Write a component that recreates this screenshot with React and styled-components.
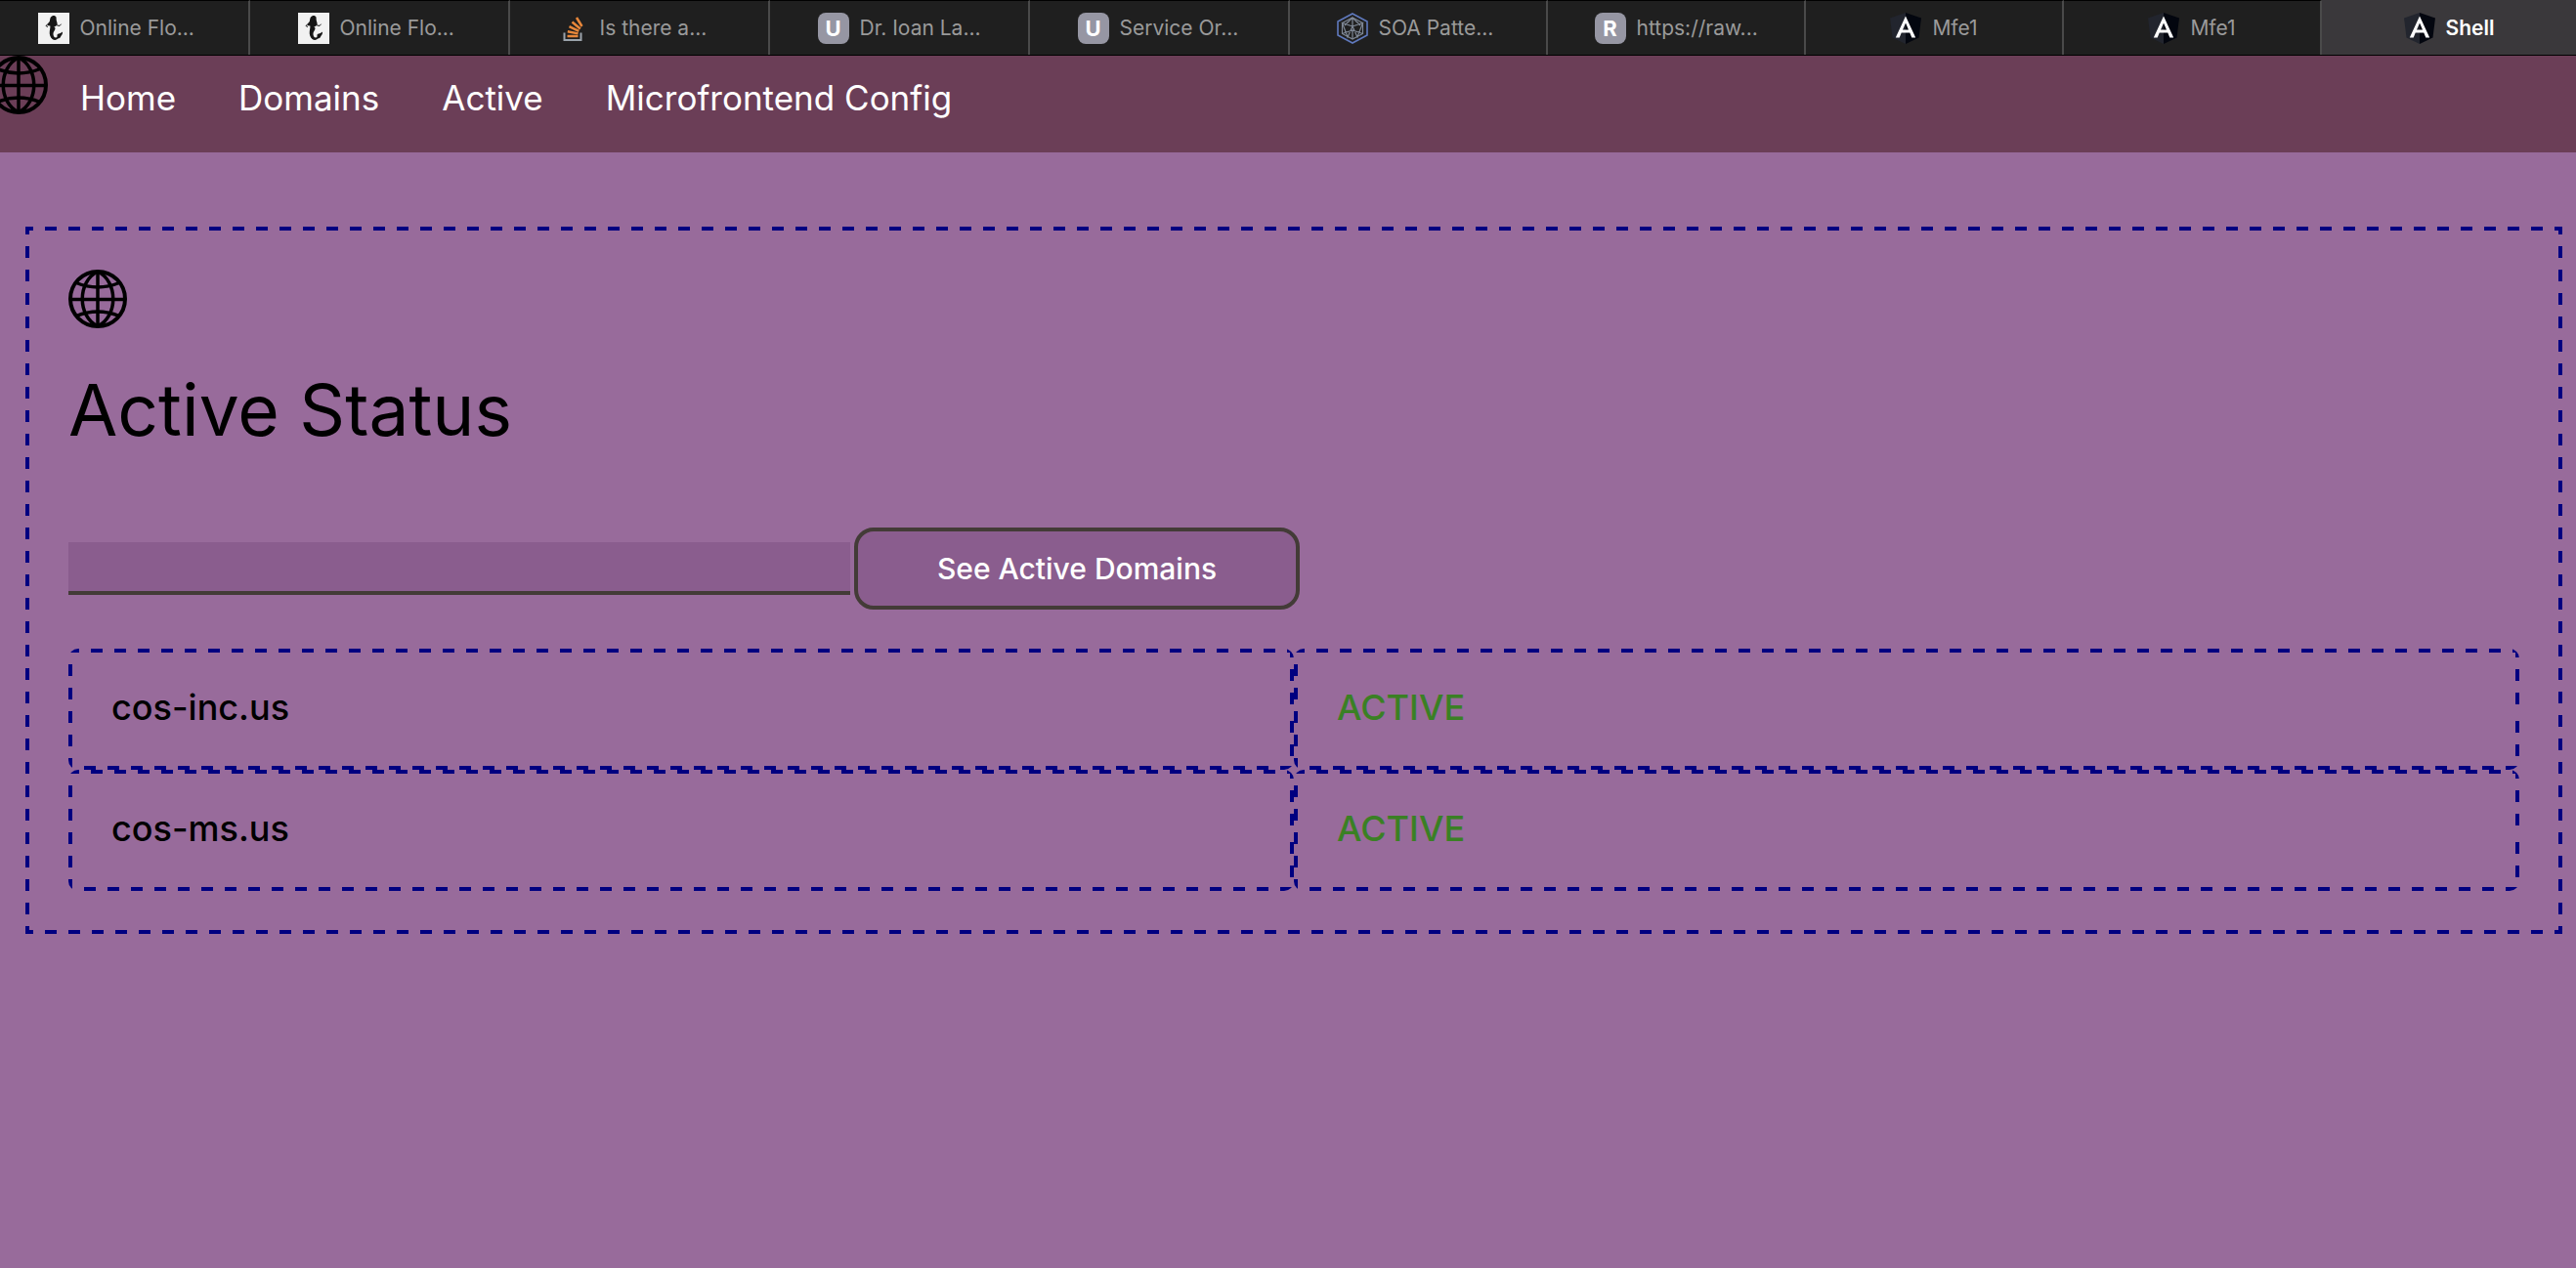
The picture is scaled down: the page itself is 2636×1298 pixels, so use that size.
import React from "react";
import styled, { createGlobalStyle, css } from "styled-components";

const sans = `Inter, "Liberation Sans", sans-serif`;
const navy = "#000080";

const GlobalStyle = createGlobalStyle`
  *, *::before, *::after { box-sizing: border-box; }
  html { background: #986b9b; }
  body { margin: 0; font-family: ${sans}; color: #000; }
`;

/* ---------- browser tab strip ---------- */

const TabStrip = styled.div`
  display: grid;
  grid-template-columns: 256fr repeat(4, 266fr) repeat(4, 264fr) 260fr;
  height: 57px;
  background: #1f1f1f;
  border-bottom: 1px solid #000;
`;

const Tab = styled.button`
  display: flex;
  align-items: center;
  justify-content: center;
  gap: 11px;
  min-width: 0;
  margin: 0;
  padding: ${(p) => (p.$cut ? "0 10px 0 0" : "0")};
  border: 0;
  border-top: 1px solid ${(p) => (p.$active ? "#3a383b" : "#000")};
  border-right: ${(p) => (p.$active ? "0" : "2px solid #4a4a4a")};
  background: ${(p) => (p.$active ? "#3a383b" : "transparent")};
  color: ${(p) => (p.$active ? "#fff" : "#9a9a9a")};
  font-family: ${sans};
  font-size: 21px;
  font-weight: ${(p) => (p.$active ? 600 : 400)};
  line-height: 32px;
`;

const TabLabel = styled.span`
  width: ${(p) => (p.$long ? "124px" : "auto")};
  text-align: left;
  white-space: nowrap;
`;

const Letter = styled.span`
  display: grid;
  place-items: center;
  width: 32px;
  height: 32px;
  flex: none;
  border-radius: 8px;
  background: #9696a3;
  color: #fff;
  font-size: 22px;
  font-weight: 700;
`;

const Favicon = styled.svg`
  width: 32px;
  height: 32px;
  flex: none;
`;

const Mermaid = () => (
  <Favicon viewBox="0 0 32 32" aria-hidden="true">
    <rect width="32" height="32" fill="#f1f1f1" />
    <g fill="#161616">
      <path d="M13 4.500c1.200-1.800 4-2.200 5.200-.4.800 1.300.2 2.600.6 4 .3 1.500 1 2.500.8 4-.8 1.800-3 2.200-4 3.200-1.800-.8-3.200-2.200-5-2-1.200-.3-1.400-1.400-.6-2.300 1.200-1 1.800-1.700 2-3 .2-1.300.3-2.500 1-3.500z" />
      <path d="M12.500 13c2 1.500 4.800 1 5 3 .1 1.800-1.800 3-2 5-.2 2.300.8 4.600 2.600 4.600 1.200 0 1.600-.8 1.400-2-.1-1.300.5-2.200 1.600-2.200 1.500 0 2.600-.6 3.900-1.800.2 2-.5 3.300-1.700 4.400-.3 1.500-1.400 2.500-3 2.600-1.500 1.700-4 2-5.800.3-2-1.800-3.200-5-2.700-8 .3-2 .7-3.800.7-5.900z" />
    </g>
    <path d="M18 12.500l4 1 1.500-1.800M10 11.500l-2 2 2 1" fill="none" stroke="#161616" />
  </Favicon>
);

const Stack = () => (
  <Favicon viewBox="0 0 32 32" aria-hidden="true">
    <path d="M6.500 20.500v7.500h17v-7.500" fill="none" stroke="#9ba3ab" strokeWidth="2" />
    <g stroke="#e8873a" strokeWidth="2.500">
      <path d="M9.500 24h11" />
      <path d="M9.800 19.200l10.800 2.200" />
      <path d="M11.500 14.200l9.800 4.700" />
      <path d="M14.500 9.500l8.300 7" />
      <path d="M19 5l5.500 9" />
    </g>
  </Favicon>
);

const Hexagon = () => (
  <Favicon viewBox="0 0 32 32" aria-hidden="true">
    <path d="M16 1l15 8v14l-15 8L1 23V9z" fill="none" stroke="#5f79bd" strokeWidth="1.600" />
    <g fill="none" stroke="#7f8896" strokeWidth="1.200">
      <path d="M16 5l10.500 5.500v11L16 27 5.500 21.500v-11z" />
      <path d="M16 5v9l-10.500-3.500L11 25l5-11 5 11 5.500-14.500L16 14M5.500 21.500L16 18l10.500 3.500M16 5L8 13M16 5l8 8M16 18v9" />
    </g>
  </Favicon>
);

const Angular = () => (
  <Favicon viewBox="0 0 32 32" aria-hidden="true">
    <path d="M16 0L0 5.500l2.500 20L16 32z" fill="#22252e" />
    <path d="M16 0l16 5.500-2.500 20L16 32z" fill="#03060f" />
    <path
      d="M16 3.500L5.800 25.500h3.900l2-5h8.600l2 5h3.900zM16 10.500l3 7h-6z"
      fill="#fff"
      fillRule="evenodd"
    />
  </Favicon>
);

const tabs = [
  { icon: <Mermaid />, text: "Online Flo...", long: true, cut: true },
  { icon: <Mermaid />, text: "Online Flo...", long: true },
  { icon: <Stack />, text: "Is there a...", long: true },
  { icon: <Letter aria-hidden="true">U</Letter>, text: "Dr. Ioan La...", long: true },
  { icon: <Letter aria-hidden="true">U</Letter>, text: "Service Or...", long: true },
  { icon: <Hexagon />, text: "SOA Patte...", long: true },
  { icon: <Letter aria-hidden="true">R</Letter>, text: "https://raw...", long: true },
  { icon: <Angular />, text: "Mfe1" },
  { icon: <Angular />, text: "Mfe1" },
  { icon: <Angular />, text: "Shell", active: true },
];

/* ---------- site navigation ---------- */

const GlobeSvg = styled.svg`
  display: block;
  width: 60px;
  height: 60px;
  flex: none;
`;

const Globe = () => (
  <GlobeSvg viewBox="0 0 60 60" fill="none" stroke="#000" strokeWidth="3.500" aria-hidden="true">
    <circle cx="30" cy="30" r="28" strokeWidth="4" />
    <path d="M30 2v56M2 30.500h56" />
    <path d="M30 2C9 12 9 48 30 58M30 2c21 10 21 46 0 56" />
    <path d="M8 13.500Q30 22.500 52 13.500M8 47.500Q30 38.500 52 47.500" />
  </GlobeSvg>
);

const Nav = styled.nav`
  display: flex;
  align-items: flex-start;
  gap: 33px;
  height: 99px;
  overflow: hidden;
  background: #6b3e57;

  ${GlobeSvg} {
    margin-left: -11px;
  }
`;

const NavLinks = styled.div`
  display: flex;
  gap: 64px;
  padding-top: 23px;
`;

const NavLink = styled.a`
  color: #fff;
  font-size: 35px;
  line-height: 40px;
  text-decoration: none;
`;

/* ---------- page content ---------- */

const Panel = styled.main`
  margin: 76px 14px 0 26px;
  padding: 44px;
  background:
    repeating-linear-gradient(90deg, ${navy} 0 8px, transparent 8px 20px, ${navy} 20px 24px) top / 100% 4px no-repeat,
    repeating-linear-gradient(90deg, ${navy} 0 8px, transparent 8px 20px, ${navy} 20px 24px) bottom / 100% 4px no-repeat,
    repeating-linear-gradient(180deg, ${navy} 0 8px, transparent 8px 20px, ${navy} 20px 24px) left / 4px 100% no-repeat,
    repeating-linear-gradient(180deg, ${navy} 0 8px, transparent 8px 20px, ${navy} 20px 24px) right / 4px 100% no-repeat;
`;

const Title = styled.h1`
  margin: 44px 0 80px;
  font-size: 73px;
  font-weight: 400;
  line-height: 80px;
`;

const SearchForm = styled.form`
  display: flex;
  align-items: center;
  gap: 4px;
`;

const field = css`
  margin: 0;
  background: #8a5d8e;
  color: #fff;
  font-family: ${sans};
  font-size: 30px;
  font-weight: 500;
`;

const DomainInput = styled.input`
  ${field}
  width: 800px;
  height: 54px;
  padding: 0 8px;
  border: 0;
  border-bottom: 4px solid #433b37;
  border-radius: 0;
  outline: 0;
`;

const SubmitButton = styled.button`
  ${field}
  width: 456px;
  height: 84px;
  border: 4px solid #433b37;
  border-radius: 20px;
`;

const DomainTable = styled.table`
  width: 100%;
  margin-top: 40px;
  border-spacing: 0;
  table-layout: fixed;
`;

const Cell = styled.td`
  height: 124px;
  padding: 0 44px 4px;
  border-radius: 10px;
  background:
    linear-gradient(90deg, ${navy} 12px, transparent 12px) -1px 0 / 24px 4px repeat-x,
    linear-gradient(90deg, ${navy} 12px, transparent 12px) 16px 100% / 24px 4px repeat-x,
    linear-gradient(180deg, ${navy} 12px, transparent 12px) 0 16px / 4px 24px repeat-y,
    repeating-linear-gradient(180deg, ${navy} 0 9px, transparent 9px 21px, ${navy} 21px 24px) 100% 0 / 4px 50% no-repeat,
    repeating-linear-gradient(180deg, transparent 0 12px, ${navy} 12px 24px) 100% 100% / 4px 50% no-repeat;
  color: ${(p) => (p.$status ? "#3a8024" : "#000")};
  font-size: 36px;
  font-weight: 500;
  line-height: 40px;
  text-align: left;
`;

const links = ["Home", "Domains", "Active", "Microfrontend Config"];

const domains = [
  { name: "cos-inc.us", status: "ACTIVE" },
  { name: "cos-ms.us", status: "ACTIVE" },
];

export default function App() {
  return (
    <>
      <GlobalStyle />
      <TabStrip>
        {tabs.map((tab, i) => (
          <Tab key={i} type="button" $active={tab.active} $cut={tab.cut}>
            {tab.icon}
            <TabLabel $long={tab.long}>{tab.text}</TabLabel>
          </Tab>
        ))}
      </TabStrip>
      <Nav>
        <Globe />
        <NavLinks>
          {links.map((name) => (
            <NavLink key={name} href="#">
              {name}
            </NavLink>
          ))}
        </NavLinks>
      </Nav>
      <Panel>
        <Globe />
        <Title>Active Status</Title>
        <SearchForm onSubmit={(e) => e.preventDefault()}>
          <DomainInput type="text" aria-label="Domain" />
          <SubmitButton type="submit">See Active Domains</SubmitButton>
        </SearchForm>
        <DomainTable>
          <tbody>
            {domains.map((d) => (
              <tr key={d.name}>
                <Cell as="th" scope="row">
                  {d.name}
                </Cell>
                <Cell $status>{d.status}</Cell>
              </tr>
            ))}
          </tbody>
        </DomainTable>
      </Panel>
    </>
  );
}
